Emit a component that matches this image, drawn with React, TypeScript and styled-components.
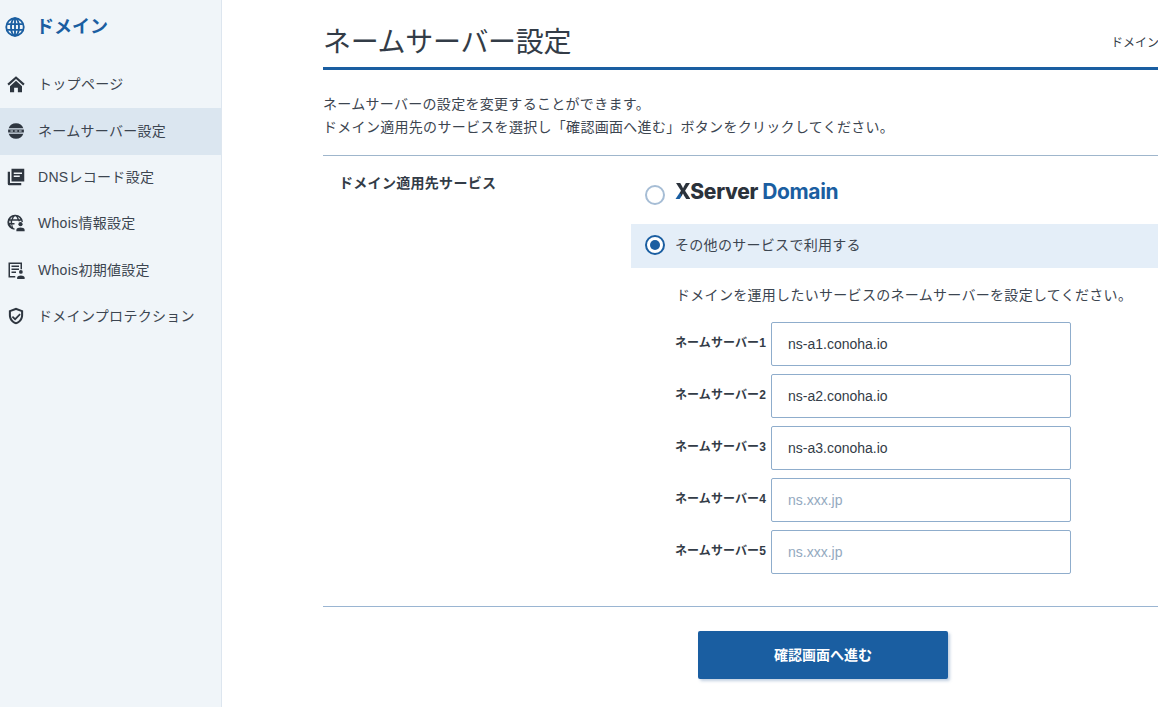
import { ReactNode } from 'react';
import styled, { createGlobalStyle } from 'styled-components';

const GlobalStyle = createGlobalStyle`
  html, body {
    margin: 0;
    padding: 0;
    height: 100%;
    overflow: hidden;
    background: #fff;
    color: #333c47;
    font-family: "Liberation Sans", "Noto Sans CJK JP", sans-serif;
  }
  * { box-sizing: border-box; }
`;

const Page = styled.div`
  display: flex;
  width: 1158px;
  height: 707px;
  overflow: hidden;
`;

const Sidebar = styled.aside`
  flex: 0 0 222px;
  background: #f0f5f9;
  border-right: 1px solid #dde6ef;
`;

const SideHeader = styled.div`
  display: flex;
  align-items: center;
  gap: 11px;
  height: 53px;
  padding-left: 5px;
  margin-bottom: 9px;
  color: #1a5ea1;
  font-size: 18px;
  font-weight: 700;
`;

const SideTitle = styled.span`
  margin-top: -3px;
`;

const NavList = styled.nav`
  display: flex;
  flex-direction: column;
`;

const NavItem = styled.a<{ $active?: boolean }>`
  display: flex;
  align-items: center;
  gap: 13px;
  height: 46.4px;
  padding: 0 0 4px 7px;
  font-size: 14px;
  letter-spacing: 0.3px;
  color: #3c4550;
  background: ${(p) => (p.$active ? '#dbe6f0' : 'transparent')};
`;

const NavIcon = styled.svg`
  flex: 0 0 18px;
  width: 18px;
  height: 18px;
  margin-top: 2px;
  fill: #2e3640;
`;

const Main = styled.main`
  flex: 1;
  min-width: 0;
  padding: 19px 0 0 101px;
`;

const TitleRow = styled.header`
  display: grid;
  grid-template-columns: 788px 1fr;
  align-items: center;
  height: 51px;
  border-bottom: 3px solid #1a5ea1;
  padding-bottom: 1px;
`;

const Title = styled.h1`
  margin: 0;
  font-size: 28px;
  font-weight: 400;
  line-height: 42px;
  letter-spacing: -0.3px;
  color: #333c47;
`;

const Crumb = styled.span`
  font-size: 12px;
  white-space: nowrap;
  color: #333c47;
  margin-top: -3px;
`;

const Intro = styled.p`
  margin: 0;
  padding: 23px 0 16px;
  font-size: 14px;
  letter-spacing: 0.3px;
  line-height: 23px;
  color: #3c4550;
  border-bottom: 1px solid #9fb6cc;
`;

const FormRow = styled.section`
  display: grid;
  grid-template-columns: 308px 1fr;
  padding: 16px 0 32px;
  border-bottom: 1px solid #9ab5d2;
`;

const RowLabel = styled.div`
  padding: 1px 0 0 16px;
  font-size: 14px;
  letter-spacing: 0.3px;
  font-weight: 700;
  line-height: 20px;
`;

const Options = styled.div`
  display: flex;
  flex-direction: column;
`;

const Option = styled.div<{ $selected?: boolean }>`
  display: flex;
  align-items: center;
  gap: 10px;
  height: 44px;
  padding: 0 0 2px 14px;
  font-size: 14px;
  letter-spacing: 0.3px;
  color: #3c4550;
  background: ${(p) => (p.$selected ? '#e4eef8' : 'transparent')};
`;

const OptionText = styled.span`
  margin-bottom: 2px;
`;

const LogoOption = styled(Option)`
  height: 52px;
  padding-bottom: 7px;
`;

const Radio = styled.span<{ $on?: boolean }>`
  display: flex;
  align-items: center;
  justify-content: center;
  width: 20px;
  height: 20px;
  border-radius: 50%;
  background: #fff;
  border: 2px solid ${(p) => (p.$on ? '#1a5ea1' : '#a6bdd5')};
  &::after {
    content: '';
    display: ${(p) => (p.$on ? 'block' : 'none')};
    width: 10px;
    height: 10px;
    border-radius: 50%;
    background: #1a5ea1;
  }
`;

const Logo = styled.span`
  position: relative;
  top: -3px;
  font-family: "Inter", "Liberation Sans", sans-serif;
  font-size: 21px;
  font-weight: 800;
  letter-spacing: -0.35px;
  color: #2b323b;
  white-space: nowrap;
`;

const LogoX = styled.span`
  background: linear-gradient(to top right, #1a5ea1 38%, #2b323b 38%);
  -webkit-background-clip: text;
  background-clip: text;
  color: transparent;
`;

const LogoBlue = styled.span`
  color: #1a5ea1;
  font-weight: 700;
`;

const Servers = styled.div`
  display: flex;
  flex-direction: column;
  gap: 8px;
  padding-left: 44px;
`;

const ServersNote = styled.p`
  margin: 17px 0 9px 1px;
  font-size: 14px;
  letter-spacing: 0.3px;
  line-height: 20px;
  color: #3c4550;
  white-space: nowrap;
`;

const ServerRow = styled.label`
  display: flex;
  align-items: center;
`;

const ServerLabel = styled.span`
  flex: 0 0 96px;
  font-size: 12px;
  letter-spacing: 0.1px;
  font-weight: 700;
  white-space: nowrap;
  margin-top: -6px;
`;

const ServerInput = styled.input`
  width: 300px;
  height: 44px;
  padding: 0 16px;
  border: 1px solid #8fadcc;
  border-radius: 2px;
  outline: none;
  background: #fff;
  font-family: inherit;
  font-size: 14px;
  color: #333c47;
  &::placeholder {
    color: #93a9c0;
    opacity: 1;
  }
`;

const Actions = styled.div`
  display: flex;
  justify-content: center;
  width: 1000px;
  padding-top: 24px;
`;

const Submit = styled.button`
  width: 250px;
  height: 48px;
  padding: 0 0 2px;
  border: none;
  border-radius: 2px;
  background: #1a5ea1;
  box-shadow: 2px 2px 3px rgba(80, 120, 170, 0.35);
  color: #fff;
  font-family: inherit;
  font-size: 14px;
  font-weight: 700;
`;

const Icon = ({ children }: { children: ReactNode }) => <NavIcon viewBox="0 0 24 24">{children}</NavIcon>;

const nav: { label: string; icon: ReactNode; active?: boolean }[] = [
  {
    label: 'トップページ',
    icon: (
      <path d="M12 1.500 0.500 11.800l1.900 2.100L12 5.300l9.600 8.600 1.900-2.100L12 1.500zM12 7.800 4 15v8h5.500v-6h5v6H20v-8l-8-7.200z" />
    ),
  },
  {
    label: 'ネームサーバー設定',
    active: true,
    icon: (
      <path
        fillRule="evenodd"
        d="M12 1.500a10.500 10.500 0 0 0-9.800 6.800h19.600A10.500 10.500 0 0 0 12 1.500zM1.500 10v4h21v-4h-21zM4.500 11.200h3.500v1.600H4.500v-1.600zm5.700 0h3.600v1.600h-3.600v-1.600zm5.800 0h3.500v1.600H16v-1.600zM2.200 15.700a10.500 10.500 0 0 0 19.600 0H2.200z"
      />
    ),
  },
  {
    label: 'DNSレコード設定',
    icon: (
      <path
        fillRule="evenodd"
        d="M6 1h17v17H6V1zM1 5h3v15h15v3H3a2 2 0 0 1-2-2V5zm8 1v2h11V6H9zm0 4v2h8v-2H9z"
      />
    ),
  },
  {
    label: 'Whois情報設定',
    icon: (
      <>
        <path
          fillRule="evenodd"
          d="M11 1a10 10 0 0 0-1 20v-2.100a8 8 0 0 1-1.500-.4C7.700 17 7.200 15.300 7 14h3v-2H6.900a16 16 0 0 1 0-3h8.200v.5h2V9h2a8 8 0 0 1 .2 1.500h2A10 10 0 0 0 11 1zm0 2c.9 0 2.300 1.600 3 4H8c.7-2.400 2.100-4 3-4zM7.700 3.800C7 4.700 6.400 5.800 6 7H4.100a8 8 0 0 1 3.600-3.200zm6.600 0A8 8 0 0 1 17.900 7H16a11 11 0 0 0-1.700-3.200zM3.200 9H4.900a16 16 0 0 0 0 3H3.200a8 8 0 0 1 0-3zM4.100 14H5.700c.2 1.100.6 2.200 1.200 3.200A8 8 0 0 1 4.100 14z"
        />
        <circle cx="18" cy="13.500" r="2.800" />
        <path d="M12.500 23v-2c0-1.800 3-3 5.500-3s5.500 1.200 5.500 3v2h-11z" />
      </>
    ),
  },
  {
    label: 'Whois初期値設定',
    icon: (
      <>
        <path
          fillRule="evenodd"
          d="M2 2h18v9h-2V4H4v16h7v2H2V2zm4 4h10v2H6V6zm0 4h10v2H6v-2zm0 4h6v2H6v-2z"
        />
        <circle cx="18.500" cy="14.500" r="2.500" />
        <path d="M13.500 24v-2c0-1.600 2.700-2.800 5-2.800s5 1.200 5 2.800v2h-10z" />
      </>
    ),
  },
  {
    label: 'ドメインプロテクション',
    icon: (
      <path
        fillRule="evenodd"
        d="M12 1 2.500 4.500V11c0 5.800 4 10.600 9.500 12 5.500-1.400 9.500-6.200 9.500-12V4.500L12 1zm0 2.900 6.800 2.500V11c0 4.300-2.800 8-6.800 9.300C8 19 5.200 15.300 5.200 11V6.400L12 3.900zm4.700 4.900-5.900 5.900-2.800-2.800-1.600 1.600 4.400 4.400 7.500-7.500-1.600-1.600z"
      />
    ),
  },
];

const servers = [
  { label: 'ネームサーバー1', value: 'ns-a1.conoha.io' },
  { label: 'ネームサーバー2', value: 'ns-a2.conoha.io' },
  { label: 'ネームサーバー3', value: 'ns-a3.conoha.io' },
  { label: 'ネームサーバー4', value: '' },
  { label: 'ネームサーバー5', value: '' },
];

export default function App() {
  return (
    <>
      <GlobalStyle />
      <Page>
        <Sidebar>
          <SideHeader>
            <svg width="20" height="20" viewBox="0 0 24 24" fill="none" stroke="#1a5ea1" strokeWidth="2.200">
              <circle cx="12" cy="12" r="10.500" />
              <ellipse cx="12" cy="12" rx="4.800" ry="10.500" />
              <path d="M12 1.500v21M2.500 8.500h19M2.500 15.500h19" />
            </svg>
            <SideTitle>ドメイン</SideTitle>
          </SideHeader>
          <NavList>
            {nav.map((item) => (
              <NavItem key={item.label} $active={item.active}>
                <Icon>{item.icon}</Icon>
                {item.label}
              </NavItem>
            ))}
          </NavList>
        </Sidebar>
        <Main>
          <TitleRow>
            <Title>ネームサーバー設定</Title>
            <Crumb>ドメイン</Crumb>
          </TitleRow>
          <Intro>
            ネームサーバーの設定を変更することができます。
            <br />
            ドメイン適用先のサービスを選択し「確認画面へ進む」ボタンをクリックしてください。
          </Intro>
          <FormRow>
            <RowLabel>ドメイン適用先サービス</RowLabel>
            <Options>
              <LogoOption>
                <Radio />
                <Logo>
                  <LogoX>X</LogoX>Server <LogoBlue>Domain</LogoBlue>
                </Logo>
              </LogoOption>
              <Option $selected>
                <Radio $on />
                <OptionText>その他のサービスで利用する</OptionText>
              </Option>
              <Servers>
                <ServersNote>ドメインを運用したいサービスのネームサーバーを設定してください。</ServersNote>
                {servers.map((s) => (
                  <ServerRow key={s.label}>
                    <ServerLabel>{s.label}</ServerLabel>
                    <ServerInput defaultValue={s.value} placeholder="ns.xxx.jp" />
                  </ServerRow>
                ))}
              </Servers>
            </Options>
          </FormRow>
          <Actions>
            <Submit>確認画面へ進む</Submit>
          </Actions>
        </Main>
      </Page>
    </>
  );
}
